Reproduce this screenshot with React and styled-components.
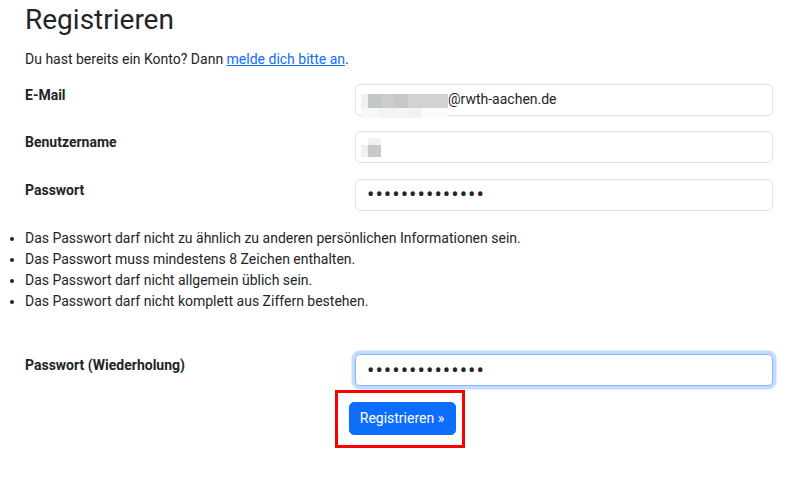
import styled, { createGlobalStyle, css } from "styled-components";

const GlobalStyle = createGlobalStyle`
    body {
        margin: 0;
        background: #fff;
        color: #212529;
        font-family: Roboto, "Noto Sans", sans-serif;
        font-size: 14px;
        line-height: 1.5;
    }
`;

const Page = styled.div`
    padding: 0 30px 40px 25px;
`;

const Title = styled.h1`
    margin: 0 0 12px;
    padding-top: 3px;
    font-size: 28px;
    font-weight: 400;
    line-height: 1.2;
`;

const Intro = styled.p`
    margin: 0 0 14px;
`;

const Link = styled.a`
    color: #0d6efd;
    text-decoration: underline;
`;

const Form = styled.form`
    display: flex;
    flex-direction: column;
`;

const Row = styled.div`
    display: grid;
    grid-template-columns: 330px 1fr;
    margin-bottom: 15.5px;
    margin-top: ${(p) => (p.$spaced ? "42px" : "0")};
`;

const Label = styled.label`
    font-weight: 700;
    line-height: 21px;
    padding-top: 1px;
`;

const fieldBox = css`
    box-sizing: border-box;
    width: 100%;
    height: 32px;
    padding: 0 11px;
    border: 1px solid #dee2e6;
    border-radius: 5px;
    background: #fff;
    color: #212529;
    font-family: Roboto, "Noto Sans", sans-serif;
    font-size: 14px;
`;

const Field = styled.div`
    ${fieldBox};
    display: flex;
    align-items: center;
    padding-left: 5px;
`;

const PasswordInput = styled.input`
    ${fieldBox};
    outline: none;
    font-size: 22px;
    letter-spacing: 1px;
    ${(p) =>
        p.$focused &&
        css`
            border-color: #86b7fe;
            box-shadow: 0 0 0 3.5px rgba(13, 110, 253, 0.25);
        `}
`;

const Mosaic = styled.span`
    display: flex;
    flex-direction: column;
    margin-top: ${(p) => p.$shift}px;
    flex-shrink: 0;
`;

const MosaicRow = styled.span`
    display: flex;
    height: ${(p) => p.$h}px;
`;

const Pixel = styled.span`
    display: block;
    width: ${(p) => p.$w}px;
    background: ${(p) => p.$c};
`;

const Hints = styled.ul`
    margin: 2px 0 0;
    padding-left: 0;
    line-height: 21px;
`;

const Actions = styled.div`
    display: flex;
    justify-content: center;
    margin-top: -12px;
    margin-left: -25px;
    margin-right: -26px;
`;

const Highlight = styled.span`
    display: inline-block;
    border: 3px solid #f00;
    padding: 9px 6px 10px 11px;
`;

const Button = styled.button`
    display: block;
    box-sizing: border-box;
    width: 107px;
    height: 33px;
    border: 1px solid #0d6efd;
    border-radius: 5px;
    background: #0d6efd;
    color: #fff;
    font-family: Roboto, "Noto Sans", sans-serif;
    font-size: 14px;
    padding: 0;
    cursor: pointer;
`;

const emailMask = [
    { h: 14, cells: [["#f4efeb", 7], ["#c3c6c9", 13], ["#cdcdcb", 13], ["#c6c7c9", 14], ["#d2d2d2", 40]] },
    { h: 10, cells: [["#f7f8f8", 7], ["#f6f8f8", 13], ["#f2f4f4", 13], ["#f4f5f5", 14], ["#f1f2f2", 13], ["#fbfbfb", 27]] },
];

const userMask = [
    { h: 7, cells: [["transparent", 7], ["#f1f1f1", 13]] },
    { h: 12, cells: [["#f4efeb", 7], ["#c6c8ca", 13]] },
];

const Mask = ({ rows, shift }) => (
    <Mosaic $shift={shift}>
        {rows.map((row, i) => (
            <MosaicRow key={i} $h={row.h}>
                {row.cells.map(([c, w], j) => (
                    <Pixel key={j} $c={c} $w={w} />
                ))}
            </MosaicRow>
        ))}
    </Mosaic>
);

const hints = [
    "Das Passwort darf nicht zu ähnlich zu anderen persönlichen Informationen sein.",
    "Das Passwort muss mindestens 8 Zeichen enthalten.",
    "Das Passwort darf nicht allgemein üblich sein.",
    "Das Passwort darf nicht komplett aus Ziffern bestehen.",
];

const App = () => {
    return (
        <Page>
            <GlobalStyle />
            <Title>Registrieren</Title>
            <Intro>
                Du hast bereits ein Konto? Dann <Link href="#">melde dich bitte an</Link>.
            </Intro>
            <Form onSubmit={(e) => e.preventDefault()}>
                <Row>
                    <Label>E-Mail</Label>
                    <Field>
                        <Mask rows={emailMask} shift={12} />
                        @rwth-aachen.de
                    </Field>
                </Row>
                <Row>
                    <Label>Benutzername</Label>
                    <Field>
                        <Mask rows={userMask} shift={0} />
                    </Field>
                </Row>
                <Row>
                    <Label>Passwort</Label>
                    <PasswordInput type="password" defaultValue="abcdefghijklmn" readOnly />
                </Row>
                <Hints>
                    {hints.map((h) => (
                        <li key={h}>{h}</li>
                    ))}
                </Hints>
                <Row $spaced>
                    <Label>Passwort (Wiederholung)</Label>
                    <PasswordInput type="password" defaultValue="abcdefghijklmn" readOnly $focused />
                </Row>
                <Actions>
                    <Highlight>
                        <Button type="submit">Registrieren »</Button>
                    </Highlight>
                </Actions>
            </Form>
        </Page>
    );
};

export default App;
